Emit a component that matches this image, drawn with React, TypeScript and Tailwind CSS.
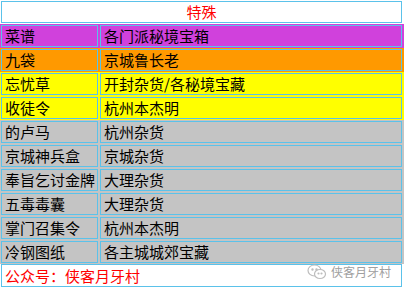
const rows: { name: string; src: string; bg: string }[] = [
  { name: '菜谱', src: '各门派秘境宝箱', bg: 'bg-[#d041dc]' },
  { name: '九袋', src: '京城鲁长老', bg: 'bg-[#ff9900]' },
  { name: '忘忧草', src: '开封杂货/各秘境宝藏', bg: 'bg-[#ffff00]' },
  { name: '收徒令', src: '杭州本杰明', bg: 'bg-[#ffff00]' },
  { name: '的卢马', src: '杭州杂货', bg: 'bg-[#c4c4c4]' },
  { name: '京城神兵盒', src: '京城杂货', bg: 'bg-[#c4c4c4]' },
  { name: '奉旨乞讨金牌', src: '大理杂货', bg: 'bg-[#c4c4c4]' },
  { name: '五毒毒囊', src: '大理杂货', bg: 'bg-[#c4c4c4]' },
  { name: '掌门召集令', src: '杭州本杰明', bg: 'bg-[#c4c4c4]' },
  { name: '冷钢图纸', src: '各主城城郊宝藏', bg: 'bg-[#c4c4c4]' },
];

function WechatIcon() {
  return (
    <svg width="20" height="16" viewBox="0 0 20 16" fill="none" stroke="#bdbdbd" strokeWidth="1.2">
      <ellipse cx="7.5" cy="6.5" rx="6.5" ry="5.5" fill="white" />
      <ellipse cx="13" cy="10" rx="5.5" ry="4.5" fill="white" />
      <circle cx="5.5" cy="5.5" r="0.6" fill="#bdbdbd" />
      <circle cx="9.5" cy="5.5" r="0.6" fill="#bdbdbd" />
      <circle cx="11.5" cy="9.5" r="0.5" fill="#bdbdbd" />
      <circle cx="14.5" cy="9.5" r="0.5" fill="#bdbdbd" />
    </svg>
  );
}

export default function App() {
  return (
    <div
      className="w-[404px] h-[289px] bg-white text-[15px] leading-[20px] text-black overflow-hidden"
      style={{ fontFamily: '"Noto Sans CJK SC", "Noto Sans", sans-serif' }}
    >
      {/* Title */}
      <div className="pt-px pl-px pr-[2px]">
        <div className="h-[22px] border border-[#5bc2ea] flex items-center justify-center text-[#ff0000]">
          特殊
        </div>
      </div>

      {/* Data rows */}
      <div className="pt-px">
        {rows.map((r) => (
          <div key={r.name} className={`${r.bg} h-[24px] p-px flex gap-[2px]`}>
            <div className="w-[97px] h-[22px] border border-[#5bc2ea] flex items-center pl-[3px] whitespace-nowrap">
              {r.name}
            </div>
            <div className="flex-1 h-[22px] border border-[#5bc2ea] flex items-center pl-[3px] mr-px whitespace-nowrap">
              {r.src}
            </div>
          </div>
        ))}
      </div>

      {/* Footer */}
      <div className="pl-px pr-[2px]">
        <div className="h-[23px] border border-[#5bc2ea] flex items-center justify-between pl-[3px] pr-[10px]">
          <span className="text-[#ff0000]">公众号：侠客月牙村</span>
          <span className="flex items-center gap-[4px] -mt-[8px] text-[12px] text-[#a0a0a0]">
            <WechatIcon />
            侠客月牙村
          </span>
        </div>
      </div>
    </div>
  );
}
